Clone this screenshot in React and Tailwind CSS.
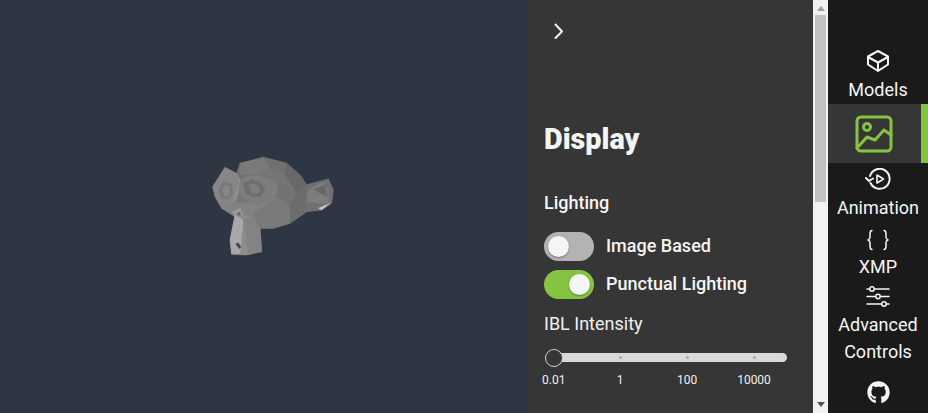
import React from "react";
import { FaGithub } from "react-icons/fa";

const font = { fontFamily: "Roboto, sans-serif" };

function Monkey() {
  const f = [
    ["#777777", "68,140 105,82 140,100 150,70 220,52 290,70 330,105 350,135 415,117 430,150 425,190 395,210 350,215 300,250 250,265 210,265 215,335 170,345 125,343 120,300 135,230 95,205 75,170"],
    ["#707070", "150,70 220,52 290,70 330,105 350,135 350,215 300,250 250,265 210,265 185,215 260,170 265,125 200,105 150,120 140,100"],
    ["#7a7a7a", "150,70 220,52 240,85 200,105 150,105"],
    ["#707070", "220,52 290,70 285,105 240,85"],
    ["#676767", "290,70 330,105 350,135 320,160 285,105"],
    ["#747474", "240,85 285,105 320,160 265,125 200,105"],
    ["#727272", "265,125 320,160 300,200 260,170"],
    ["#6c6c6c", "320,160 350,135 350,215 300,250 300,200"],
    ["#7a7a7a", "260,170 300,200 300,250 250,265 210,265 190,220"],
    ["#7d7d7d", "145,125 165,110 205,105 260,125 265,150 250,180 210,195 180,190 150,165"],
    ["#6e6e6e", "160,130 185,118 215,130 225,150 210,170 185,170 165,155"],
    ["#7c7c7c", "175,135 195,130 210,145 205,160 185,160"],
    ["#868686", "68,140 105,82 140,100 145,130 130,170 135,190 95,205 75,170"],
    ["#787878", "85,150 100,125 125,130 130,160 115,180 95,175"],
    ["#868686", "95,150 105,135 120,140 118,165 105,170"],
    ["#8e8e8e", "140,100 150,120 145,160 135,190 130,170 145,130"],
    ["#828282", "95,205 135,190 180,190 210,195 260,170 190,220 210,265 185,230 135,230"],
    ["#9a9a9a", "125,215 150,205 160,225 140,235"],
    ["#666666", "140,222 150,215 152,225 144,230"],
    ["#8c8c8c", "135,225 185,230 210,265 215,335 170,345 125,343 120,300"],
    ["#a8a8a8", "135,225 160,240 150,340 125,343 120,300"],
    ["#838383", "185,230 210,265 215,335 175,340 160,240"],
    ["#3d4249", "137,312 145,308 153,322 148,326"],
    ["#707070", "345,135 415,117 430,150 425,190 395,210 350,215 350,175"],
    ["#7d7d7d", "355,150 400,125 415,150 415,190 395,190 350,185"],
    ["#676767", "372,148 405,135 412,170 390,160"],
    ["#c4c4c4", "385,205 420,190 395,210"],
  ];
  return (
    <svg viewBox="0 0 528 413" className="w-full h-full block">
      <defs>
        <filter id="soft" x="-5%" y="-5%" width="110%" height="110%">
          <feGaussianBlur stdDeviation="0.45" />
        </filter>
      </defs>
      <g transform="translate(190 140) scale(0.3333)" filter="url(#soft)">
        {f.map(([c, p], i) => (
          <polygon key={i} points={p} fill={c} stroke={c} strokeWidth="1" strokeLinejoin="round" />
        ))}
      </g>
    </svg>
  );
}

const Nav = ({ icon, lines, gap }) => (
  <div className="flex flex-col items-center shrink-0">
    {icon}
    <div style={{ height: gap }} />
    {lines.map((l) => (
      <div key={l} className="text-[18px] leading-[27px] text-[#f5f5f5]">
        {l}
      </div>
    ))}
  </div>
);

function Toggle({ on, label }) {
  return (
    <div className="flex items-center h-[38px]">
      <div className={`relative w-[50px] h-[29px] rounded-full ${on ? "bg-[#85c440]" : "bg-[#b3b3b3]"}`}>
        <div
          className={`absolute top-[4px] w-[21px] h-[21px] rounded-full bg-[#f5f5f5] shadow-[0_1px_2px_rgba(0,0,0,0.35)] ${
            on ? "left-[25px]" : "left-[4px]"
          }`}
        />
      </div>
      <span className="ml-[12px] pb-[2px] text-[18px] font-medium text-[#f5f5f5]">{label}</span>
    </div>
  );
}

const Tick = ({ label }) => (
  <div className="w-0 flex flex-col items-center">
    <div className="w-[3px] h-[3px] mt-[3px] rounded-full bg-[#a8a8a8]" />
    <div className="mt-[14px] text-[12px] leading-[14px] text-[#f0f0f0]">{label}</div>
  </div>
);

function Scrollbar() {
  return (
    <div className="w-[15px] h-full shrink-0 bg-[#f1f1f1] flex flex-col items-center">
      <svg width="8" height="5" viewBox="0 0 8 5" className="block mt-[6px] shrink-0">
        <path d="M4 0 L8 5 H0 Z" fill="#a3a3a3" />
      </svg>
      <div className="w-[11px] h-[187px] mt-[4px] bg-[#c1c1c1] shrink-0" />
      <div className="flex-1" />
      <svg width="8" height="5" viewBox="0 0 8 5" className="block mb-[6px] shrink-0">
        <path d="M0 0 H8 L4 5 Z" fill="#505050" />
      </svg>
    </div>
  );
}

export default function App() {
  return (
    <div className="flex h-[413px] w-[928px] overflow-hidden" style={font}>
      <div className="w-[528px] h-full bg-[#2f3643]">
        <Monkey />
      </div>
      <div className="w-[285px] h-full bg-[#363636] overflow-hidden pl-[16px]">
        <div className="pt-[22px] pl-[6px] h-[40px]">
          <svg width="18" height="18" viewBox="0 0 18 18" fill="none" stroke="#f5f5f5" strokeWidth="2" strokeLinecap="round" strokeLinejoin="round" className="block">
            <path d="M5.5 2.5 L12 9.5 L5.5 16" />
          </svg>
        </div>
        <h1 className="mt-[79px] text-[28.8px] leading-[40px] font-black text-[#f5f5f5]">Display</h1>
        <div className="mt-[31px] text-[18px] leading-[26px] font-medium text-[#f5f5f5]">Lighting</div>
        <div className="mt-[11px]">
          <Toggle label="Image Based" />
          <Toggle on label="Punctual Lighting" />
        </div>
        <div className="mt-[8px] text-[18px] leading-[26px] text-[#f0f0f0]">IBL Intensity</div>
        <div className="relative mt-[16px] ml-[9px] w-[234px] h-[9px] rounded-r-full bg-[#d9d9d9]">
          <div className="absolute left-[-8px] top-[-4px] w-[18px] h-[18px] rounded-full bg-[#363636] border border-[#d0d0d0]" />
        </div>
        <div className="relative flex -mt-[9px] ml-[9px] h-[30px]">
          <div className="w-[67px]" />
          <div className="w-[67px]"><Tick label="1" /></div>
          <div className="w-[67px]"><Tick label="100" /></div>
          <div className="w-0"><Tick label="10000" /></div>
          <div className="absolute left-[-11px] top-[20px] text-[12px] leading-[14px] text-[#f0f0f0]">0.01</div>
        </div>
      </div>
      <Scrollbar />
      <div className="w-[100px] h-full bg-[#1a1a1a] flex flex-col overflow-hidden">
        <div className="h-[50px] shrink-0" />
        <Nav
          lines={["Models"]}
          gap={4}
          icon={
            <svg width="24" height="22" viewBox="0 0 24 22" fill="none" stroke="#f5f5f5" strokeWidth="2" strokeLinejoin="round" className="block h-[22px]">
              <path d="M12 1 L22 6.5 V14.5 L12 21 L2 14.5 V6.5 Z" />
              <path d="M2 7 L12 12.5 L22 7 M12 12.5 V21" />
            </svg>
          }
        />
        <div className="relative h-[59px] mt-[1px] shrink-0 bg-[#363636] flex items-center justify-center">
          <div className="absolute right-0 top-0 bottom-0 w-[7px] bg-[#85c440]" />
          <svg width="38" height="38" viewBox="0 0 38 38" fill="none" stroke="#85c440" strokeWidth="3" strokeLinejoin="round" strokeLinecap="round" className="block mr-[8px]">
            <rect x="2" y="2" width="34" height="34" rx="4" />
            <circle cx="12" cy="12" r="3.5" />
            <path d="M2 33 L12 22 L20 25 L29 15 L36 20" />
          </svg>
        </div>
        <div className="h-[5px] shrink-0" />
        <Nav
          lines={["Animation"]}
          gap={4}
          icon={
            <svg width="26" height="22" viewBox="0 0 26 22" fill="none" stroke="#f5f5f5" strokeWidth="2" strokeLinecap="round" strokeLinejoin="round" className="block h-[22px]">
              <path d="M5 8 A10 10 0 1 1 5.5 15" />
              <path d="M1 10 L4 13 L8 10.5" />
              <path d="M12 7 L18.5 11 L12 15 Z" strokeWidth="1.6" />
            </svg>
          }
        />
        <div className="h-[8px] shrink-0" />
        <Nav
          lines={["XMP"]}
          gap={2}
          icon={
            <svg width="22" height="22" viewBox="0 0 22 22" fill="none" stroke="#f5f5f5" strokeWidth="1.5" strokeLinecap="round" strokeLinejoin="round" className="block h-[22px]">
              <path d="M5 1.5 C3 1.5 3 3 3 5 V8 C3 10 2.5 10.5 1 11 C2.5 11.5 3 12 3 14 V17 C3 19 3 20.5 5 20.5" />
              <path d="M17 1.5 C19 1.5 19 3 19 5 V8 C19 10 19.5 10.5 21 11 C19.5 11.5 19 12 19 14 V17 C19 19 19 20.5 17 20.5" />
            </svg>
          }
        />
        <div className="h-[6px] shrink-0" />
        <Nav
          lines={["Advanced", "Controls"]}
          gap={3}
          icon={
            <svg width="24" height="22" viewBox="0 0 24 22" fill="none" stroke="#f5f5f5" strokeWidth="1.5" strokeLinecap="round" className="block h-[22px]">
              <path d="M1 3 H3.5 M8.5 3 H23" />
              <circle cx="6" cy="3" r="2.2" />
              <path d="M1 10.5 H9.5 M14.5 10.5 H23" />
              <circle cx="12" cy="10.5" r="2.2" />
              <path d="M1 18 H15.5 M20.5 18 H23" />
              <circle cx="18" cy="18" r="2.2" />
            </svg>
          }
        />
        <div className="flex justify-center mt-[16px] shrink-0">
          <FaGithub size={23} color="#f5f5f5" />
        </div>
      </div>
    </div>
  );
}
